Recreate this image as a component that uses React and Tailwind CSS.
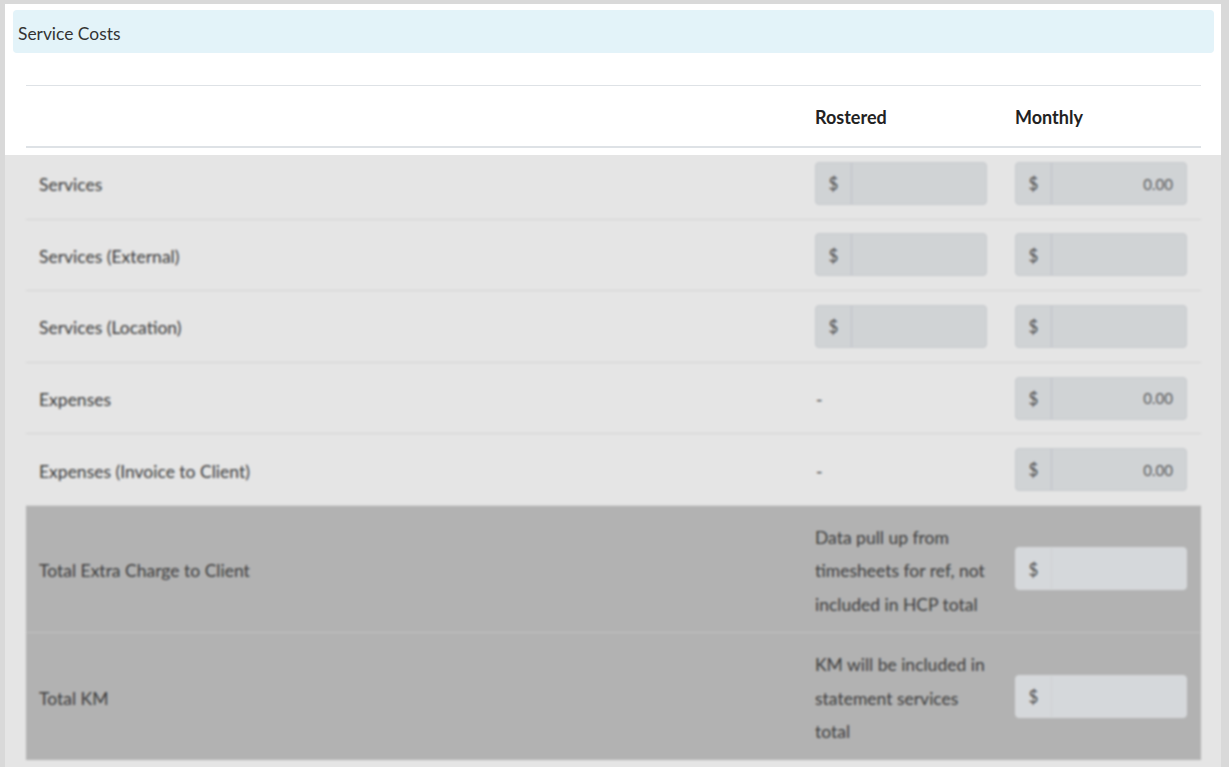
import React from "react";

const font = { fontFamily: "Lato, 'Open Sans', sans-serif" };

function MoneyInput({ value, dark }) {
  return (
    <div
      className={`flex h-[43px] w-[172px] overflow-hidden rounded-[4px] border ${
        dark ? "border-[#eef1f4] bg-[#eef1f4]" : "border-[#dfe3e7] bg-[#e8ebee]"
      }`}
    >
      <div
        className={`flex w-[36px] items-center justify-center border-r pt-[1px] text-[17px] text-[#555] ${
          dark ? "border-[#e6e9ec]" : "border-[#d5d9dd]"
        }`}
      >
        $
      </div>
      <div className="flex flex-1 items-center justify-end pr-[13px] pt-[1px] text-[15px] text-[#666]">
        {value}
      </div>
    </div>
  );
}

const rows = [
  { label: "Services", r: { v: "" }, m: "0.00" },
  { label: "Services (External)", r: { v: "" }, m: "" },
  { label: "Services (Location)", r: { v: "" }, m: "" },
  { label: "Expenses", r: null, m: "0.00" },
  { label: "Expenses (Invoice to Client)", r: null, m: "0.00" },
];

export default function App() {
  return (
    <div className="h-[767px] w-[1229px] overflow-hidden bg-[#d9d9d9] pl-[5px] pt-[4px] pr-[8px]" style={font}>
      <div className="relative flex h-full flex-col bg-white">
        <div className="pl-[8px] pr-[7px] pt-[6px]">
          <div className="flex h-[43px] items-center rounded-[4px] bg-[#e3f3f9] pl-[5px] pt-[6px] text-[17.4px] text-[#333]">
            Service Costs
          </div>
        </div>
        <div className="ml-[21px] mr-[20px] mt-[32px]">
          <div className="grid h-[63px] grid-cols-[777px_200px_198px] items-center border-t border-b-2 border-[#dee2e6] pt-[2px] text-[18px] font-bold text-[#222]">
            <div />
            <div className="pl-[12px]">Rostered</div>
            <div className="pl-[12px]">Monthly</div>
          </div>
          {rows.map((row) => (
            <div
              key={row.label}
              className="grid h-[71.6px] grid-cols-[777px_200px_198px] items-center border-b border-[#ededed] text-[17.5px] text-[#444]"
            >
              <div className="pl-[13px] pt-[4px]">{row.label}</div>
              <div className="pl-[12px]">
                {row.r ? <MoneyInput value={row.r.v} /> : <span className="inline-block pl-[1px] pt-[4px]">-</span>}
              </div>
              <div className="pl-[12px]">
                <MoneyInput value={row.m} />
              </div>
            </div>
          ))}
          <div className="grid h-[127px] grid-cols-[777px_200px_198px] items-center border-b border-[#d6d6d6] bg-[#c7c7c7] text-[17.5px] text-[#444]">
            <div className="pl-[13px] pt-[5px]">Total Extra Charge to Client</div>
            <div className="pl-[12px] pr-[14px] pt-[4px] leading-[33.5px]">
              Data pull up from timesheets for ref, not included in HCP total
            </div>
            <div className="pl-[12px]">
              <MoneyInput value="" dark />
            </div>
          </div>
          <div className="grid h-[127px] grid-cols-[777px_200px_198px] items-center bg-[#c7c7c7] text-[17.5px] text-[#444]">
            <div className="pl-[13px] pt-[5px]">Total KM</div>
            <div className="pl-[12px] pr-[14px] pt-[4px] leading-[33.5px]">
              KM will be included in statement services total
            </div>
            <div className="pl-[12px]">
              <MoneyInput value="" dark />
            </div>
          </div>
        </div>
        <div className="absolute bottom-0 left-0 right-0 top-[151px] bg-black/10 backdrop-blur-[1px]" />
      </div>
    </div>
  );
}
